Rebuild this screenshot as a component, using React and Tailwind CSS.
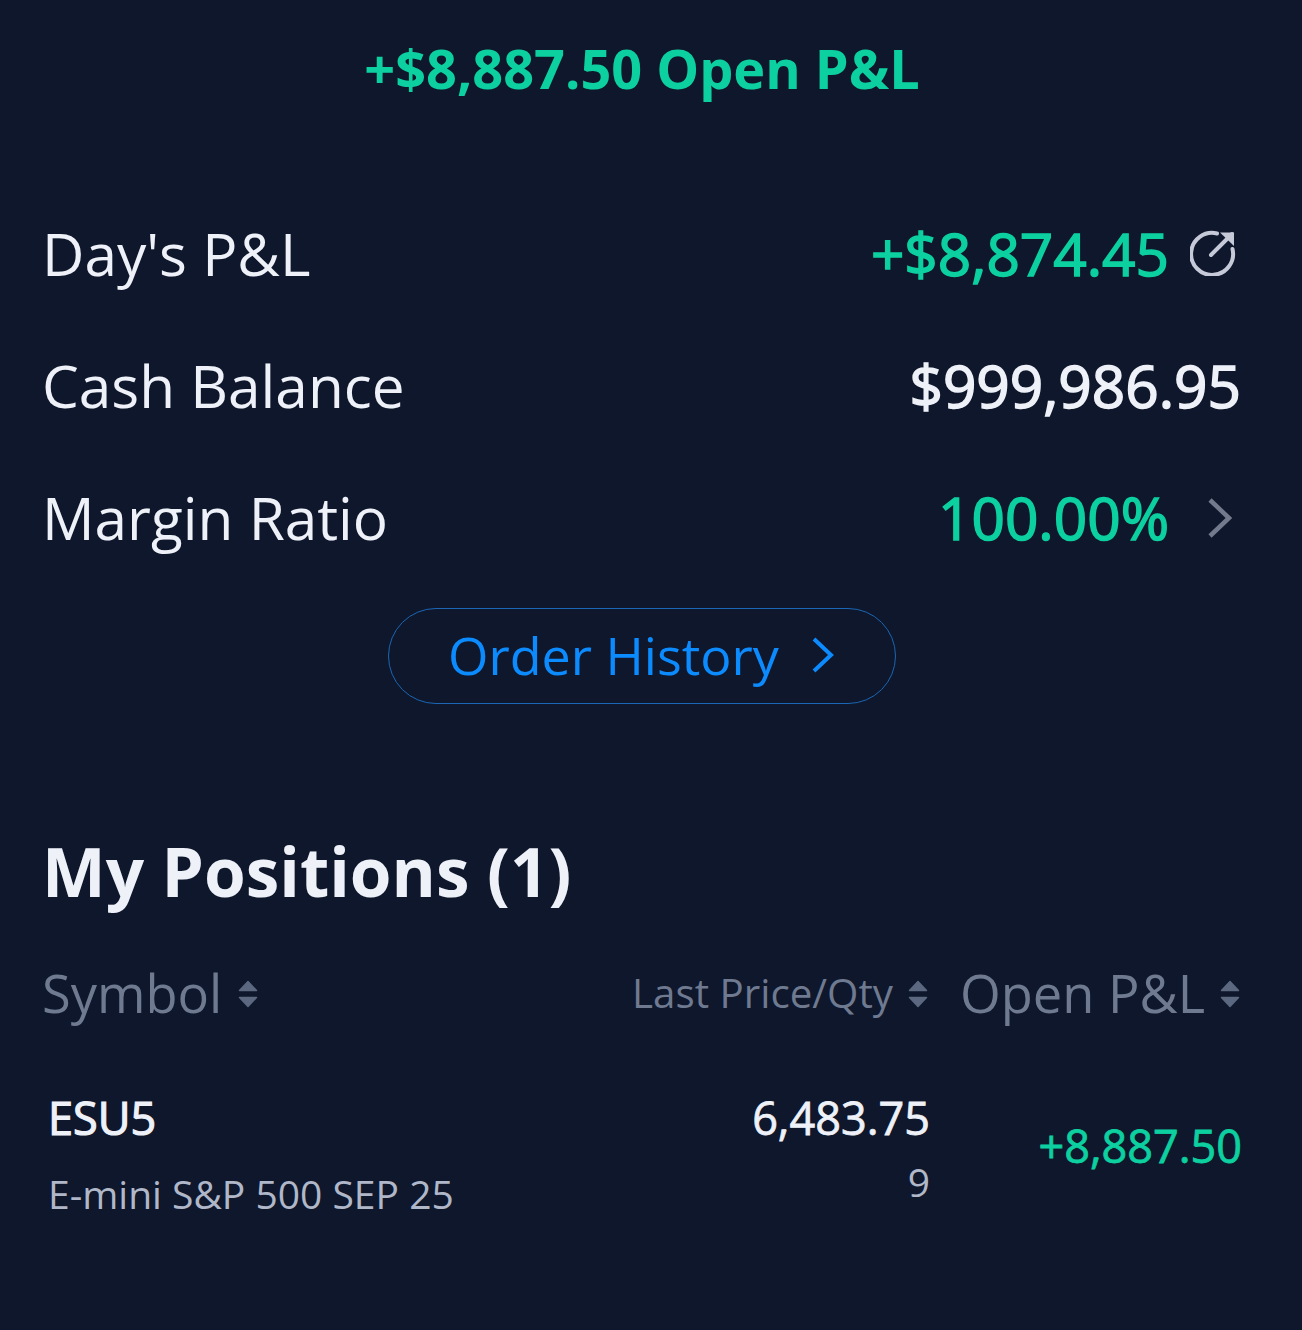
const Sort = () => (
  <svg width="20" height="28" viewBox="0 0 20 28" className="shrink-0">
    <path d="M10 1.5 L18.5 10.5 H1.5 Z M10 26.5 L18.5 17.5 H1.5 Z" fill="#5c6880" stroke="#5c6880" strokeWidth="1.5" strokeLinejoin="round" />
  </svg>
);

export default function App() {
  return (
    <div className="w-[1302px] h-[1330px] overflow-hidden bg-[#0e172b] font-['Open_Sans',sans-serif] text-[#eef1f8]">
      <div className="w-[1284px]">
        <div className="h-[136px] flex items-center justify-center text-[54px] font-bold text-[#0cd0a0] leading-none">
          +$8,887.50 Open P&amp;L
        </div>
        <div className="pl-[42px] pr-[43px] pt-[51px]">
          <div className="h-[132px] flex items-center justify-between text-[58.5px] leading-none">
            <span>Day's P&amp;L</span>
            <span className="flex items-center text-[#0cd0a0] [-webkit-text-stroke:1.5px_#0cd0a0]">
              +$8,874.45
              <svg width="46" height="46" viewBox="0 0 46 46" fill="none" stroke="#c5c9d8" strokeWidth="4" strokeLinecap="round" className="ml-[21px] mr-[5px]">
                <path d="M27 3.5 A21 21 0 1 0 42.5 19" />
                <path d="M21 25 L42 4" />
                <path d="M30 2.5 H44 V16 Z" fill="#c5c9d8" stroke="none" />
              </svg>
            </span>
          </div>
          <div className="h-[132px] flex items-center justify-between text-[58.5px] leading-none">
            <span>Cash Balance</span>
            <span className="[-webkit-text-stroke:1.5px_#eef1f8]">$999,986.95</span>
          </div>
          <div className="h-[132px] flex items-center justify-between text-[58.5px] leading-none">
            <span>Margin Ratio</span>
            <span className="flex items-center text-[#0cd0a0] [-webkit-text-stroke:1.5px_#0cd0a0]">
              100.00%
              <svg width="24" height="40" viewBox="0 0 24 40" fill="none" stroke="#737a8e" strokeWidth="4.5" className="ml-[39px] mr-[9px] mt-[2px]">
                <path d="M2 2 L21 20 L2 38" />
              </svg>
            </span>
          </div>
        </div>
        <div className="flex justify-center mt-[25px]">
          <div className="w-[508px] h-[96px] rounded-[48px] border border-[#1b66b5] flex items-center pl-[59px] pb-[2px] text-[52px] text-[#0c8bff] leading-none">
            Order History
            <svg width="22" height="36" viewBox="0 0 22 36" fill="none" stroke="#0c8bff" strokeWidth="4" className="ml-[33px]">
              <path d="M2 2 L19 18 L2 34" />
            </svg>
          </div>
        </div>
        <div className="pl-[42px] mt-[134px] text-[67.5px] font-bold leading-none">My Positions (1)</div>
        <div className="pl-[42px] pr-[44px] mt-[64px] h-[48px] flex items-center text-[#6f7a91] leading-none">
          <span className="text-[52.4px]">Symbol</span>
          <span className="ml-[16px]"><Sort /></span>
          <span className="ml-auto text-[40.3px]">Last Price/Qty</span>
          <span className="ml-[15px]"><Sort /></span>
          <span className="ml-[32px] text-[52.4px]">Open P&amp;L</span>
          <span className="ml-[15px]"><Sort /></span>
        </div>
        <div className="pl-[48px] pr-[42px] mt-[78px] flex leading-none">
          <div className="flex flex-col">
            <span className="text-[45px] h-[44px] flex items-center [-webkit-text-stroke:1.2px_#eef1f8]">ESU5</span>
            <span className="text-[39px] text-[#b0b7c9] mt-[32px] h-[44px] flex items-center">E-mini S&amp;P 500 SEP 25</span>
          </div>
          <div className="ml-auto flex flex-col items-end">
            <span className="text-[45px] h-[44px] flex items-center [-webkit-text-stroke:0.8px_#eef1f8]">6,483.75</span>
            <span className="text-[39px] text-[#b0b7c9] mt-[22px] h-[40px] flex items-center">9</span>
          </div>
          <div className="w-[312px] text-right text-[45px] text-[#0cd0a0] [-webkit-text-stroke:0.8px_#0cd0a0] flex items-center justify-end h-[108px] -mt-[4px]">+8,887.50</div>
        </div>
      </div>
    </div>
  );
}
